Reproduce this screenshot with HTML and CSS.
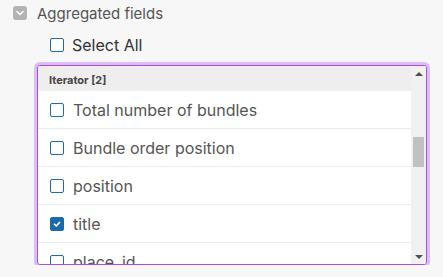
FILE: index.html
```html
<!DOCTYPE html>
<html lang="en">
<head>
  <link rel="stylesheet" href="styles.css">
</head>
<body>
  <div class="fields">
    <div class="group-head">
      <span class="toggle">
        <svg width="10" height="10" viewBox="0 0 10 10"><path d="M2 3.5 L5 6.5 L8 3.5" fill="none" stroke="#fff" stroke-width="1.6" stroke-linecap="round" stroke-linejoin="round"/></svg>
      </span>
      <span class="group-title">Aggregated fields</span>
    </div>

    <label class="select-all">
      <span class="check"></span>
      <span>Select All</span>
    </label>

    <div class="list-box">
      <div class="list">
        <div class="list-head">Iterator [2]</div>
        <div class="row"><span class="check"></span><span>Total number of bundles</span></div>
        <div class="row"><span class="check"></span><span>Bundle order position</span></div>
        <div class="row"><span class="check"></span><span>position</span></div>
        <div class="row"><span class="check checked">
          <svg width="10" height="10" viewBox="0 0 10 10"><path d="M2.5 5.2 L4.3 7 L7.6 3.4" fill="none" stroke="#fff" stroke-width="1.6" stroke-linecap="round" stroke-linejoin="round"/></svg>
        </span><span>title</span></div>
        <div class="row"><span class="check"></span><span>place_id</span></div>
      </div>
      <div class="scrollbar">
        <div class="arrow up"></div>
        <div class="track"><div class="thumb"></div></div>
        <div class="arrow down"></div>
      </div>
    </div>
  </div>
</body>
</html>
```

FILE: styles.css
```css
:root {
  --bg: #f7f7f7;
  --text: #555;
  --check: #1a6ba8;
  --purple: #a64cf2;
  --glow: #dcbdf6;
  --line: #ebebeb;
}

* {
  box-sizing: border-box;
}

body {
  margin: 0;
  background-color: var(--bg);
  font-family: Inter, "Noto Sans", sans-serif;
  color: var(--text);
}

.fields {
  padding: 6px 0 0 13px;
}

.group-head {
  display: flex;
  align-items: center;
  gap: 10px;
  height: 14px;
}

.toggle {
  width: 14px;
  height: 14px;
  border-radius: 3px;
  background-color: #b3b3b3;
  display: flex;
  align-items: center;
  justify-content: center;
}

.group-title {
  font-size: 15px;
  color: #555;
}

.select-all {
  display: flex;
  align-items: center;
  gap: 8px;
  margin: 18px 0 0 37px;
  height: 14px;
  font-size: 16px;
  color: #333;
}

.check {
  width: 14px;
  height: 14px;
  flex: none;
  border: 1.5px solid var(--check);
  border-radius: 2px;
  background: #fff;
  display: flex;
  align-items: center;
  justify-content: center;
}

.check.checked {
  background-color: var(--check);
}

.list-box {
  display: flex;
  width: 390px;
  height: 200px;
  margin: 13px 0 0 24px;
  border: 1px solid var(--purple);
  border-radius: 3px;
  box-shadow: 0 0 0 3px var(--glow);
  background: #fff;
  overflow: hidden;
}

.list {
  flex: 1;
  overflow: hidden;
}

.list-head {
  height: 25px;
  padding: 7px 11px;
  background-color: #eeeeee;
  font-size: 11px;
  font-weight: 700;
  color: #444;
}

.row {
  display: flex;
  align-items: center;
  gap: 9px;
  height: 38px;
  padding-left: 12px;
  border-bottom: 1px solid var(--line);
  font-size: 16px;
  color: #555;
}

.scrollbar {
  width: 15px;
  display: flex;
  flex-direction: column;
  background-color: #f1f1f1;
}

.arrow {
  height: 15px;
  display: flex;
  align-items: center;
  justify-content: center;
}

.arrow::before {
  content: '';
  border-left: 4px solid transparent;
  border-right: 4px solid transparent;
}

.arrow.up::before {
  border-bottom: 4px solid #505050;
}

.arrow.down::before {
  border-top: 4px solid #505050;
}

.track {
  flex: 1;
  padding: 56px 2px 0;
}

.thumb {
  height: 30px;
  background-color: #c1c1c1;
}
```
